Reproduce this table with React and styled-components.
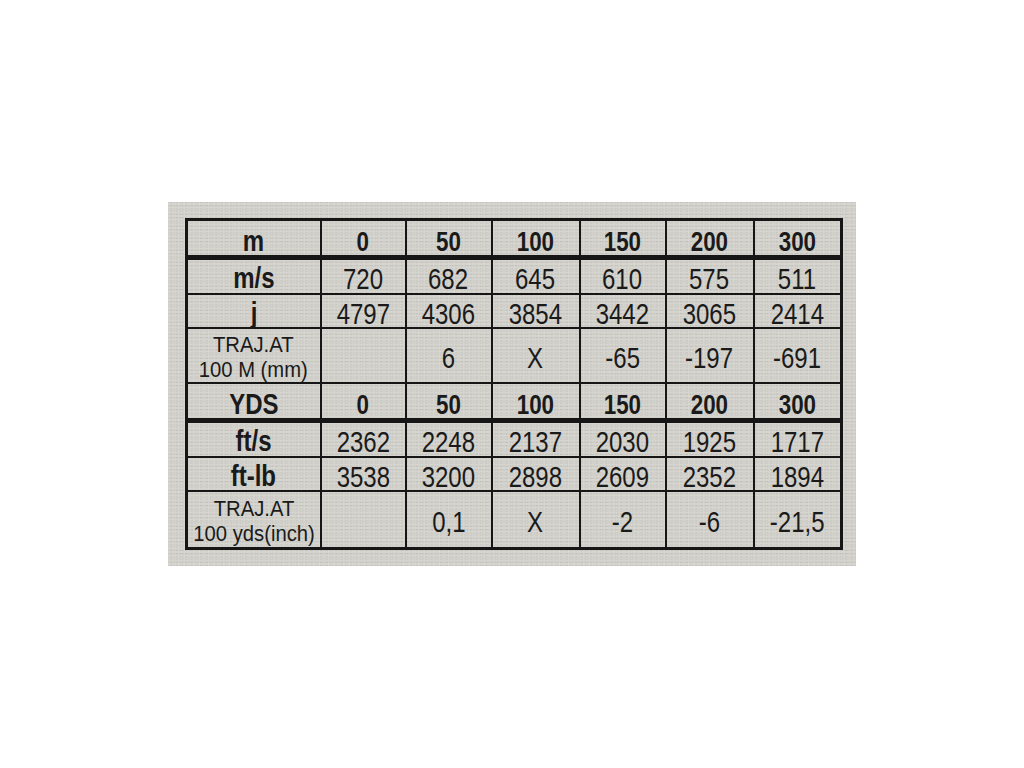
import React from "react";
import styled, { createGlobalStyle } from "styled-components";

const GlobalStyle = createGlobalStyle`
  html, body {
    margin: 0;
    padding: 0;
    background: #ffffff;
  }
  body {
    font-family: "Liberation Sans", Arial, sans-serif;
    color: #1a1a1a;
  }
`;

const sections = [
  {
    unit: "m",
    rows: [
      { label: "m/s", height: 36, values: ["720", "682", "645", "610", "575", "511"] },
      { label: "j", height: 34, values: ["4797", "4306", "3854", "3442", "3065", "2414"] },
      {
        label: ["TRAJ.AT", "100 M (mm)"],
        height: 55,
        values: ["", "6", "X", "-65", "-197", "-691"],
      },
    ],
  },
  {
    unit: "YDS",
    rows: [
      { label: "ft/s", height: 36, values: ["2362", "2248", "2137", "2030", "1925", "1717"] },
      { label: "ft-lb", height: 34, values: ["3538", "3200", "2898", "2609", "2352", "1894"] },
      {
        label: ["TRAJ.AT", "100 yds(inch)"],
        height: 58,
        values: ["", "0,1", "X", "-2", "-6", "-21,5"],
      },
    ],
  },
];

const distances = ["0", "50", "100", "150", "200", "300"];
const colWidths = [134, 85, 86, 88, 86, 88, 88];

const App = () => {
  return (
    <Page>
      <GlobalStyle />
      <Label>
        <Table>
          <colgroup>
            {colWidths.map((w, i) => (
              <col key={i} style={{ width: w }} />
            ))}
          </colgroup>
          <tbody>
            {sections.map((section) => (
              <React.Fragment key={section.unit}>
                <HeadRow>
                  <LabelCell $bold>
                    <Narrow $dy={3}>{section.unit}</Narrow>
                  </LabelCell>
                  {distances.map((d) => (
                    <HeadCell key={d}>
                      <Narrow $dy={4}>{d}</Narrow>
                    </HeadCell>
                  ))}
                </HeadRow>
                {section.rows.map((row, ri) => (
                  <Row key={ri} $h={row.height}>
                    {Array.isArray(row.label) ? (
                      <LabelCell>
                        <SmallLabel>
                          <SmallLine>{row.label[0]}</SmallLine>
                          <SmallLine>{row.label[1]}</SmallLine>
                        </SmallLabel>
                      </LabelCell>
                    ) : (
                      <LabelCell $bold>
                        <Narrow $dy={2}>{row.label}</Narrow>
                      </LabelCell>
                    )}
                    {row.values.map((v, vi) => (
                      <ValueCell key={vi}>
                        <Narrow $dy={3}>{v}</Narrow>
                      </ValueCell>
                    ))}
                  </Row>
                ))}
              </React.Fragment>
            ))}
          </tbody>
        </Table>
      </Label>
    </Page>
  );
};

export default App;

const Page = styled.div`
  width: 1024px;
  height: 768px;
  display: flex;
  align-items: flex-start;
  padding: 202px 0 0 168px;
  box-sizing: border-box;
`;

const Label = styled.div`
  width: 688px;
  height: 364px;
  box-sizing: border-box;
  padding: 16px 12px 0 17px;
  background-color: #cecdc7;
  background-image: radial-gradient(rgba(255, 255, 255, 0.18) 1px, transparent 1.3px),
    radial-gradient(rgba(120, 118, 110, 0.12) 1px, transparent 1.3px);
  background-size: 3px 4px, 5px 3px;
  background-position: 0 0, 1px 2px;
`;

const Table = styled.table`
  border-collapse: collapse;
  table-layout: fixed;
  width: 658px;
  border: 3px solid #161616;
`;

const Row = styled.tr`
  height: ${(p) => p.$h}px;
`;

const HeadRow = styled.tr`
  height: 38px;

  & > td {
    border-bottom: 5px solid #161616;
  }
`;

const Cell = styled.td`
  border: 2px solid #161616;
  padding: 0;
  text-align: center;
  vertical-align: middle;
  line-height: 22px;
  white-space: nowrap;
  color: #1a1a1a;
`;

const Narrow = styled.span`
  display: inline-block;
  transform: translateY(${(p) => p.$dy || 1}px) scaleX(0.8);
  transform-origin: center;
`;

const LabelCell = styled(Cell)`
  font-size: 30px;
  font-weight: ${(p) => (p.$bold ? 700 : 400)};
`;

const HeadCell = styled(Cell)`
  font-size: 28px;
  font-weight: 700;
`;

const ValueCell = styled(Cell)`
  font-size: 30px;
  font-weight: 400;
`;

const SmallLabel = styled.div`
  display: inline-flex;
  flex-direction: column;
  align-items: center;
  transform: translateY(1px) scaleX(0.92);
  transform-origin: center;
`;

const SmallLine = styled.span`
  display: block;
  font-size: 22px;
  line-height: 25px;
  height: 25px;
`;
